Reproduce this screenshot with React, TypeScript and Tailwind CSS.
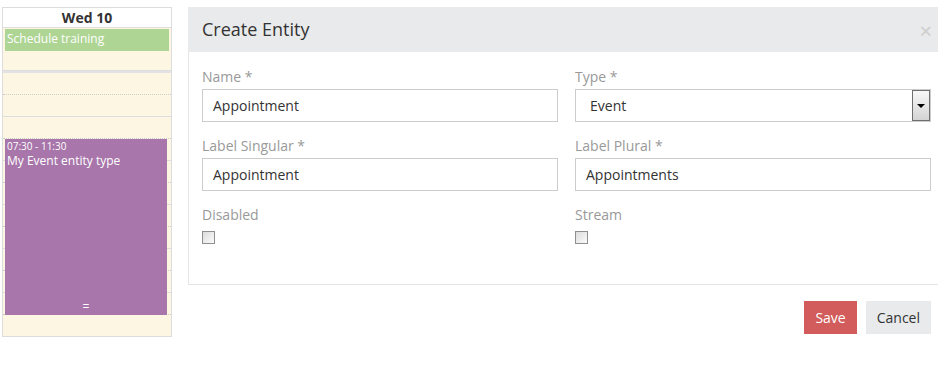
import React from "react";

const slots = Array.from({ length: 12 }, (_, i) => i);

const Field = ({ label, value }: { label: string; value: string }) => (
  <div className="flex flex-col">
    <label className="text-[14px] leading-[20px] text-[#999] mb-[2px]">{label}</label>
    <div className="h-[33px] border border-[#ccc] bg-white px-[10px] flex items-center text-[14px] text-[#333]">
      {value}
    </div>
  </div>
);

const Check = ({ label }: { label: string }) => (
  <div className="flex flex-col">
    <label className="text-[14px] leading-[20px] text-[#999] mb-[6px]">{label}</label>
    <span className="block w-[13px] h-[13px] border border-[#8f8f8f] bg-gradient-to-br from-[#dcdcdc] to-[#fbfbfb]" />
  </div>
);

const CalendarDay = () => (
  <div className="w-[170px] border border-[#ddd] bg-[#fdf6e3] text-[12px]">
    <div className="h-[20px] bg-white border-b border-[#ddd] flex items-center justify-center font-bold text-[14px] text-[#333]">
      Wed 10
    </div>
    <div className="h-[42px] pt-[1px] px-[2px]">
      <div className="h-[22px] bg-[#aed593] text-white pl-[2px] leading-[20px]">Schedule training</div>
    </div>
    <div className="h-[3px] bg-[#e3e3e3] border-t border-[#ddd]" />
    <div className="relative">
      {slots.map((i) => (
        <div
          key={i}
          className={
            i === 11
              ? "h-[21px]"
              : i % 2 === 0
              ? "h-[22px] border-b border-dotted border-[#ccc]"
              : "h-[22px] border-b border-[#ddd]"
          }
        />
      ))}
      <div className="absolute left-[2px] right-[4px] top-[66px] h-[176px] bg-[#a876aa] text-white px-[2px]">
        <div className="text-[10px] leading-[14px]">07:30 - 11:30</div>
        <div className="text-[12px] leading-[15px]">My Event entity type</div>
        <div className="absolute bottom-[2px] left-0 right-0 text-center text-[12px] leading-[12px]">=</div>
      </div>
    </div>
  </div>
);

export default function App() {
  return (
    <div
      className="w-[949px] h-[368px] bg-white flex items-start pt-[7px] pl-[2px] gap-[16px]"
      style={{ fontFamily: '"Open Sans", sans-serif' }}
    >
      <CalendarDay />
      <div className="w-[750px] flex flex-col">
        <div className="h-[45px] bg-[#e8eaeb] flex items-center justify-between pl-[14px] pr-[6px]">
          <h4 className="text-[18px] text-[#333]">Create Entity</h4>
          <span className="text-[22px] text-[#cdcdcd] leading-none">×</span>
        </div>
        <div className="border-l border-b border-[#e5e5e5] pl-[13px] pr-[7px] pt-[15px] pb-[40px]">
          <div className="grid grid-cols-2 gap-x-[17px] gap-y-[14px]">
            <Field label="Name *" value="Appointment" />
            <div className="flex flex-col">
              <label className="text-[14px] leading-[20px] text-[#999] mb-[2px]">Type *</label>
              <div className="h-[33px] border border-[#ccc] bg-white flex items-center text-[14px] text-[#333]">
                <span className="flex-1 pl-[14px]">Event</span>
                <span className="h-[31px] w-[18px] border border-[#6f6f6f] bg-gradient-to-b from-[#f8f8f8] to-[#d4d4d4] flex items-center justify-center">
                  <span className="w-0 h-0 border-l-[4px] border-r-[4px] border-t-[4px] border-l-transparent border-r-transparent border-t-black" />
                </span>
              </div>
            </div>
            <Field label="Label Singular *" value="Appointment" />
            <Field label="Label Plural *" value="Appointments" />
            <Check label="Disabled" />
            <Check label="Stream" />
          </div>
        </div>
        <div className="flex justify-end gap-[9px] pr-[7px] pt-[16px]">
          <button className="h-[33px] px-[11px] bg-[#d15c5b] text-white text-[14px]">Save</button>
          <button className="h-[33px] px-[11px] bg-[#e8eaeb] text-[#333] text-[14px]">Cancel</button>
        </div>
      </div>
    </div>
  );
}
